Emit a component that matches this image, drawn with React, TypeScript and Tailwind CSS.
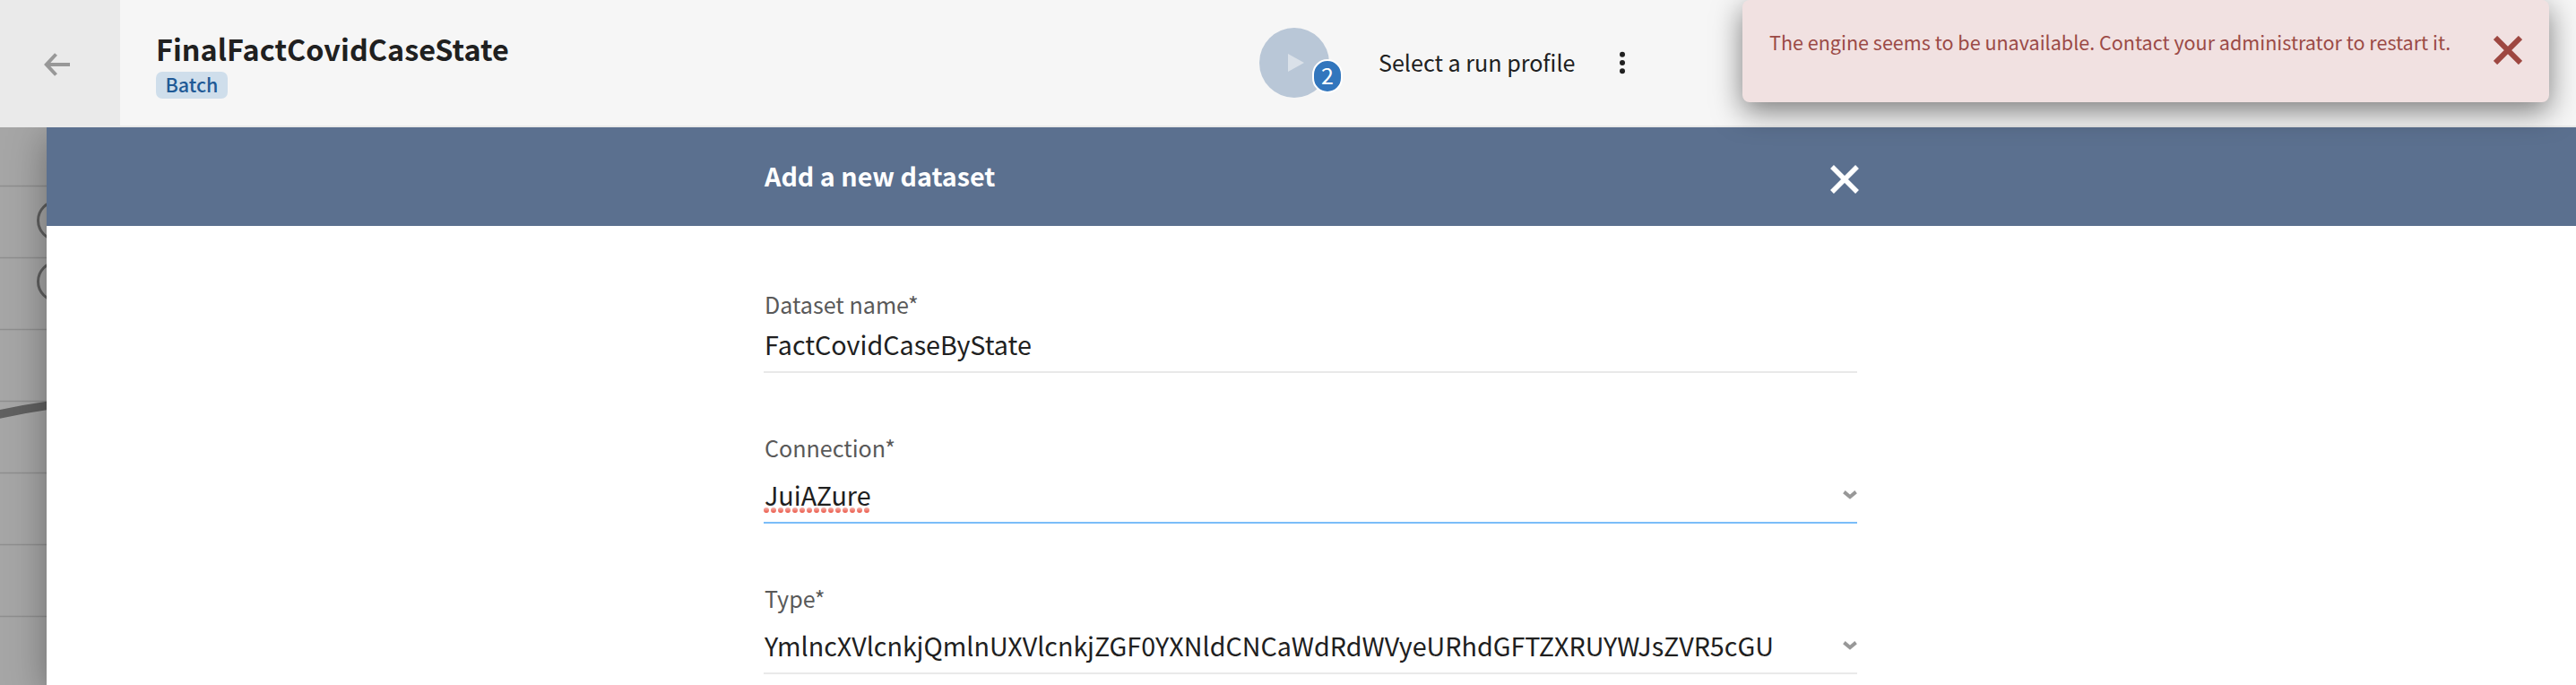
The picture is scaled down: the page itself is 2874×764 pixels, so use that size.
import React from "react";

const FONT = "font-['Noto_Sans_CJK_SC','Noto_Sans',sans-serif]";

function Cross({ className, width }: { className: string; width: number }) {
  return (
    <svg viewBox="0 0 32 32" className={className} fill="none" stroke="currentColor" strokeWidth={width}>
      <path d="M2 2 L30 30 M30 2 L2 30" />
    </svg>
  );
}

function Chevron() {
  return (
    <svg viewBox="0 0 16 10" className="h-2.5 w-4 text-[#989898]" fill="none" stroke="currentColor" strokeWidth="4">
      <path d="M1.4 1.6 L8 7.2 L14.6 1.6" />
    </svg>
  );
}

function Misspelling() {
  const dots = Array.from({ length: 15 }, (_, i) => i);
  return (
    <svg viewBox="0 0 118 6" className="absolute left-0 top-[34px] h-1.5 w-[118px]">
      <defs>
        <linearGradient id="dot" x1="0" y1="0" x2="0" y2="1">
          <stop offset="0" stopColor="#f7b5ae" />
          <stop offset="1" stopColor="#ea5545" />
        </linearGradient>
      </defs>
      {dots.map((i) => (
        <circle key={i} cx={3 + i * 8} cy="3" r="3" fill="url(#dot)" />
      ))}
    </svg>
  );
}

function Canvas() {
  const rows = [207, 287, 367, 447, 527, 607, 687];
  return (
    <div className="h-full w-[52px] shrink-0 bg-[#a6a6a6]">
      <svg viewBox="0 142 52 622" className="h-[622px] w-[52px]" fill="none">
        {rows.map((y) => (
          <path key={y} d={`M0 ${y + 0.5} H52`} stroke="#8f8f8f" strokeWidth="1.6" />
        ))}
        <circle cx="64" cy="246" r="21.5" stroke="#5f5f5f" strokeWidth="3" />
        <circle cx="64" cy="314" r="21.5" stroke="#5f5f5f" strokeWidth="3" />
        <path d="M-2 462.4 Q26 456 54 452.2" stroke="#606060" strokeWidth="9.5" />
      </svg>
    </div>
  );
}

export default function App() {
  return (
    <div className={`relative flex h-[764px] w-[2874px] flex-col overflow-hidden bg-white text-[#202020] ${FONT}`}>
      <header className="relative z-10 flex h-[142px] shrink-0 border-b-2 border-[#e9e9e9] bg-[#f6f6f6]">
        <div className="flex w-[134px] items-center bg-[#eaeaea] pl-[49px] pt-1">
          <svg viewBox="0 0 30 26" className="h-[26px] w-[30px] text-[#989898]" fill="none" stroke="currentColor" strokeWidth="4">
            <path d="M3 13 H29 M13.5 1.5 L2.8 13 L13.5 24.5" />
          </svg>
        </div>
        <div className="flex w-[1271px] flex-col items-start pl-10 pt-[34px]">
          <h1 className="whitespace-nowrap text-[32.3px] font-bold leading-10 tracking-[0.06px]">FinalFactCovidCaseState</h1>
          <span className="mt-[6px] flex h-[30px] w-20 items-center justify-center rounded-[7px] bg-[#cfdeeb] pb-[3px] text-[21.5px] font-medium leading-[24px] text-[#215a96]">
            Batch
          </span>
        </div>
        <div className="relative mt-[31px] flex size-[78px] items-center justify-center rounded-full bg-[#b9c7d7]">
          <svg viewBox="0 0 18 20" className="ml-[4px] h-5 w-[18px]">
            <path d="M0 0 L18 10 L0 20 Z" fill="#dae1e9" />
          </svg>
          <span className="absolute left-[59px] top-[35px] flex h-[38px] w-[34px] items-center justify-center rounded-full border-2 border-white bg-[#3276bd] pb-1 text-[25px] leading-[30px] text-white">
            2
          </span>
        </div>
        <div className="ml-[55px] mt-[51px] w-[220px] whitespace-nowrap text-[25.1px] leading-9">Select a run profile</div>
        <svg viewBox="0 0 8 26" className="ml-[48px] mt-[57px] h-[26px] w-2" fill="#202020">
          <circle cx="4" cy="3.7" r="3" />
          <circle cx="4" cy="13" r="3" />
          <circle cx="4" cy="22.3" r="3" />
        </svg>
      </header>

      <main className="flex h-[622px]">
        <Canvas />
        <section className="flex grow flex-col bg-white shadow-[0_10px_40px_rgba(0,0,0,0.35)]">
          <div className="flex h-[110px] items-center bg-[#5b708f] pl-[800px]">
            <h2 className="mb-[3px] w-[1190px] whitespace-nowrap pl-px text-[28.7px] font-bold leading-10 text-white">Add a new dataset</h2>
            <Cross className="mt-1.5 size-8 text-white" width={5.5} />
          </div>
          <div className="ml-[800px] flex w-[1220px] flex-col pt-[69px]">
            <div className="h-[95px] border-b-2 border-[#e9e9e9]">
              <div className="pl-px text-[25.1px] leading-9 text-[#595959]">Dataset name*</div>
              <div className="mt-[7px] pl-px text-[28.7px] leading-10">FactCovidCaseByState</div>
            </div>
            <div className="mt-[65px] h-[103px] border-b-2 border-[#7abdf9]">
              <div className="pl-px text-[25.1px] leading-9 text-[#595959]">Connection*</div>
              <div className="mt-[15px] flex items-center justify-between">
                <div className="relative pl-px text-[28.7px] leading-10">
                  JuiAZure
                  <Misspelling />
                </div>
                <Chevron />
              </div>
            </div>
            <div className="mt-[65px] h-[103px] border-b-2 border-[#e9e9e9]">
              <div className="pl-px text-[25.1px] leading-9 text-[#595959]">Type*</div>
              <div className="mt-[15px] flex items-center justify-between">
                <div className="pl-px text-[28.7px] leading-10">YmlncXVlcnkjQmlnUXVlcnkjZGF0YXNldCNCaWdRdWVyeURhdGFTZXRUYWJsZVR5cGU</div>
                <Chevron />
              </div>
            </div>
          </div>
        </section>
      </main>

      <div className="absolute left-[1944px] top-0 z-20 flex h-[114px] w-[900px] rounded-[8px] bg-[#f1e1e1] pl-[30px] text-[#9b4a46] shadow-[0_10px_32px_rgba(0,0,0,0.5)]">
        <p className="w-[808px] whitespace-nowrap pt-[29px] text-[21.55px] leading-9">
          The engine seems to be unavailable. Contact your administrator to restart it.
        </p>
        <Cross className="mt-10 size-8 text-[#9e4741]" width={6} />
      </div>
    </div>
  );
}
